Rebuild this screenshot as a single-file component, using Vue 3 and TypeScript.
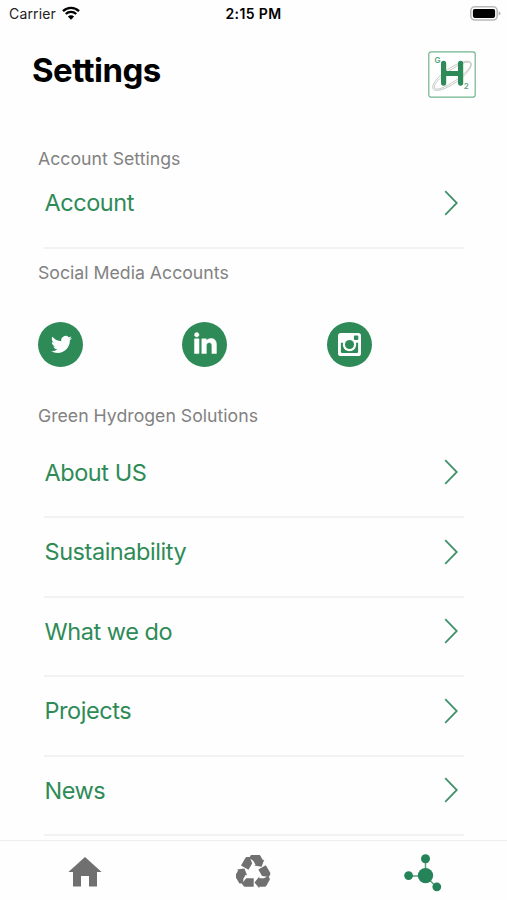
<script setup lang="ts">
interface Row {
  label: string
}

const accountRows: Row[] = [{ label: 'Account' }]
const companyRows: Row[] = [
  { label: 'About US' },
  { label: 'Sustainability' },
  { label: 'What we do' },
  { label: 'Projects' },
  { label: 'News' },
]
const recycleTurns: number[] = [0, 120, 240]
</script>

<template>
  <div class="screen">
    <header class="status">
      <div class="carrier">
        <span>Carrier</span>
        <svg class="wifi" viewBox="0 0 18 14" width="18" height="14">
          <path d="M1 5.1a11.5 11.5 0 0 1 16 0" />
          <path d="M3.8 8a7.4 7.4 0 0 1 10.4 0" />
          <path class="dot" d="M9 13.7 5.9 10.6a4.4 4.4 0 0 1 6.2 0z" />
        </svg>
      </div>
      <div class="time">2:15 PM</div>
      <div class="power">
        <svg viewBox="0 0 31 15" width="31" height="15">
          <rect x=".8" y=".8" width="26.4" height="13.2" rx="4" fill="#fff" stroke="#b8b8b8" stroke-width="1.6" />
          <rect x="2.9" y="2.9" width="22.2" height="9" rx="1.8" fill="#000" />
          <path d="M28.6 5.2q2 .8 2 2.2t-2 2.2z" fill="#b5b5b5" />
        </svg>
      </div>
    </header>

    <div class="heading">
      <h1>Settings</h1>
      <svg class="logo" viewBox="0 0 48 47" width="48" height="47">
        <rect x=".8" y=".8" width="46.4" height="45.4" rx="2.5" fill="#fff" stroke="#72b48d" stroke-width="1.2" />
        <g fill="none" stroke="#c3c9c4" stroke-width=".9">
          <ellipse cx="24" cy="24.8" rx="23" ry="7.6" transform="rotate(-35 24 24.8)" />
          <ellipse cx="24.5" cy="24.6" rx="22" ry="5.8" transform="rotate(-35 24.5 24.6)" />
        </g>
        <path d="M15.6 12.3v19.8M32.6 12.3v19.8M15.6 22.5h17" fill="none" stroke="#2e8b57" stroke-width="5.2" stroke-linecap="round" />
        <text x="6.5" y="11.5" font-size="8">G</text>
        <text x="35.8" y="38" font-size="8">2</text>
      </svg>
    </div>

    <main class="content">
      <section class="account">
        <h2>Account Settings</h2>
        <ul>
          <li v-for="row in accountRows" :key="row.label">
            <span>{{ row.label }}</span>
            <svg class="chevron" viewBox="0 0 14 26" width="14" height="26"><path d="M1.2 1.2 12.8 13 1.2 24.8" /></svg>
          </li>
        </ul>
      </section>

      <section class="social">
        <h2>Social Media Accounts</h2>
        <div class="links">
          <a class="badge" aria-label="Twitter">
            <svg class="twitter" viewBox="0 0 24 24" width="21" height="21">
              <path d="M23.953 4.57a10 10 0 01-2.825.775 4.958 4.958 0 002.163-2.723c-.951.555-2.005.959-3.127 1.184a4.92 4.92 0 00-8.384 4.482C7.69 8.095 4.067 6.13 1.64 3.162a4.822 4.822 0 00-.666 2.475c0 1.71.87 3.213 2.188 4.096a4.904 4.904 0 01-2.228-.616v.06a4.923 4.923 0 003.946 4.827 4.996 4.996 0 01-2.212.085 4.936 4.936 0 004.604 3.417 9.867 9.867 0 01-6.102 2.105c-.39 0-.779-.023-1.17-.067a13.995 13.995 0 007.557 2.209c9.053 0 13.998-7.496 13.998-13.985 0-.21 0-.42-.015-.63A9.935 9.935 0 0024 4.59z" />
            </svg>
          </a>
          <a class="badge" aria-label="LinkedIn">
            <svg class="linkedin" viewBox="-.5 .5 24 24" width="22" height="22">
              <path d="M4.98 3.5c0 1.381-1.11 2.5-2.48 2.5s-2.48-1.119-2.48-2.5c0-1.38 1.11-2.5 2.48-2.5s2.48 1.12 2.48 2.5zm.02 4.5h-5v16h5v-16zm7.982 0h-4.968v16h4.969v-8.399c0-4.67 6.029-5.052 6.029 0v8.399h4.988v-10.131c0-7.88-8.922-7.593-11.018-3.714v-2.155z" />
            </svg>
          </a>
          <a class="badge" aria-label="Instagram">
            <svg viewBox="0 0 24 24" width="23" height="23">
              <rect x="0" y="0" width="24" height="24" rx="3" />
              <path class="cut" d="M3 10.3h3.2v6h11.6v-6H21v9.2q0 1.4-1.4 1.4H4.4Q3 20.9 3 19.5z" />
              <circle cx="12" cy="12" r="7" />
              <circle class="cut" cx="12" cy="12" r="4.7" />
              <rect class="cut" x="16.6" y="2.7" width="4.6" height="4.6" rx="1" />
            </svg>
          </a>
        </div>
      </section>

      <section class="company">
        <h2>Green Hydrogen Solutions</h2>
        <ul>
          <li v-for="row in companyRows" :key="row.label">
            <span>{{ row.label }}</span>
            <svg class="chevron" viewBox="0 0 14 26" width="14" height="26"><path d="M1.2 1.2 12.8 13 1.2 24.8" /></svg>
          </li>
        </ul>
      </section>
    </main>

    <nav class="tabs">
      <a aria-label="Home">
        <svg class="home" viewBox="0 0 34 30" width="34" height="30"><path d="M17 0 33.6 15H29v14.6h-8V19h-8v10.6H5V15H.4z" /></svg>
      </a>
      <a aria-label="Recycling">
        <svg viewBox="-17.5 -17.5 35 35" width="35" height="35">
          <g v-for="turn in recycleTurns" :key="turn" :transform="`rotate(${turn})`">
            <path d="M-7.2 5.7H.2v8.6h-8.6q-1.2 0-1.8-1L-11.6 11z" />
            <path d="M1 9.9 5.8 4v1.7h4.6l4.4-2.2 1.7 3.2-3.6 6.6q-.6 1-1.8 1H5.8v1.5z" />
          </g>
        </svg>
      </a>
      <a class="active" aria-label="More">
        <svg viewBox="0 0 38 38" width="38" height="38">
          <path d="M21.5 5v17H5M21.5 22l11.3 11.3" fill="none" stroke="#5d9f80" stroke-width="1.5" />
          <circle cx="21.5" cy="21.6" r="7.7" />
          <circle cx="21.5" cy="4.8" r="4.5" />
          <circle cx="4.6" cy="21.6" r="4.4" />
          <circle cx="32.8" cy="32.8" r="4.4" />
        </svg>
      </a>
    </nav>
  </div>
</template>

<style>
body {
  margin: 0;
  background: #fefefe;
}
</style>

<style scoped>
.screen {
  display: flex;
  flex-direction: column;
  box-sizing: border-box;
  width: 507px;
  height: 900px;
  overflow: hidden;
  background: #fefefe;
  font-family: Inter, "Liberation Sans", sans-serif;
  color: #000;
}

.status {
  display: grid;
  grid-template-columns: 1fr auto 1fr;
  align-items: center;
  flex: none;
  box-sizing: border-box;
  height: 28px;
  padding: 0 6px 2px;
  font-size: 14px;
}

.carrier {
  display: flex;
  align-items: center;
  gap: 6px;
  padding-left: 3px;
  color: #222;
  letter-spacing: 0.15px;
}

.wifi {
  margin-top: -1px;
}

.wifi path {
  fill: none;
  stroke: #000;
  stroke-width: 2.4;
}

.wifi .dot {
  fill: #000;
  stroke: none;
}

.time {
  font-weight: 600;
  letter-spacing: 0.4px;
}

.power {
  display: flex;
  justify-content: flex-end;
}

.heading {
  display: flex;
  justify-content: space-between;
  flex: none;
  height: 103px;
  padding: 0 31px;
}

h1 {
  margin: 21px 0 0 1px;
  font-size: 33px;
  line-height: 42px;
  font-weight: 700;
  letter-spacing: -0.55px;
}

.logo {
  margin-top: 23px;
}

.logo text {
  fill: #5aa67c;
  font-weight: 600;
}

.content {
  flex: 1;
  min-height: 0;
  overflow: hidden;
  padding: 0 43px 0 38px;
}

section {
  box-sizing: border-box;
}

.account {
  height: 117px;
  padding-top: 16px;
}

.social {
  height: 143px;
  padding-top: 12.5px;
}

.company {
  padding-top: 13px;
}

h2 {
  margin: 0;
  font-size: 17.7px;
  line-height: 24px;
  font-weight: 400;
  color: #828282;
}

ul {
  margin: 0;
  padding: 0 0 0 6px;
  list-style: none;
}

li {
  display: flex;
  justify-content: space-between;
  align-items: center;
  box-sizing: border-box;
  height: 79.5px;
  padding: 0 6px 10px 0.5px;
  border-bottom: 2px solid #f2f2f2;
  color: #2e8b57;
  font-size: 23.5px;
  letter-spacing: -0.45px;
}

.account ul {
  margin-top: -2px;
}

.company ul {
  margin-top: 10.5px;
}

.chevron path {
  fill: none;
  stroke: #43916a;
  stroke-width: 1.8;
}

.links {
  display: grid;
  grid-template-columns: repeat(3, 144.4px);
  padding-top: 37px;
}

.badge {
  display: flex;
  align-items: center;
  justify-content: center;
  width: 45px;
  height: 45px;
  border-radius: 50%;
  background: #2e8b57;
}

.badge svg {
  fill: #fff;
}

.badge .twitter {
  margin-left: 1px;
}

.badge .linkedin {
  margin-top: -2px;
  overflow: visible;
  stroke: #fff;
  stroke-width: 0.5;
}

.badge .cut {
  fill: #2e8b57;
}

.tabs {
  display: grid;
  grid-template-columns: repeat(3, 1fr);
  flex: none;
  box-sizing: border-box;
  height: 60px;
  border-top: 1px solid #ededed;
  background: #fefefe;
}

.tabs a {
  display: flex;
  align-items: center;
  justify-content: center;
  height: 63px;
  fill: #707070;
}

.tabs .home {
  margin-bottom: 2px;
}

.tabs .active {
  fill: #25835a;
}
</style>
